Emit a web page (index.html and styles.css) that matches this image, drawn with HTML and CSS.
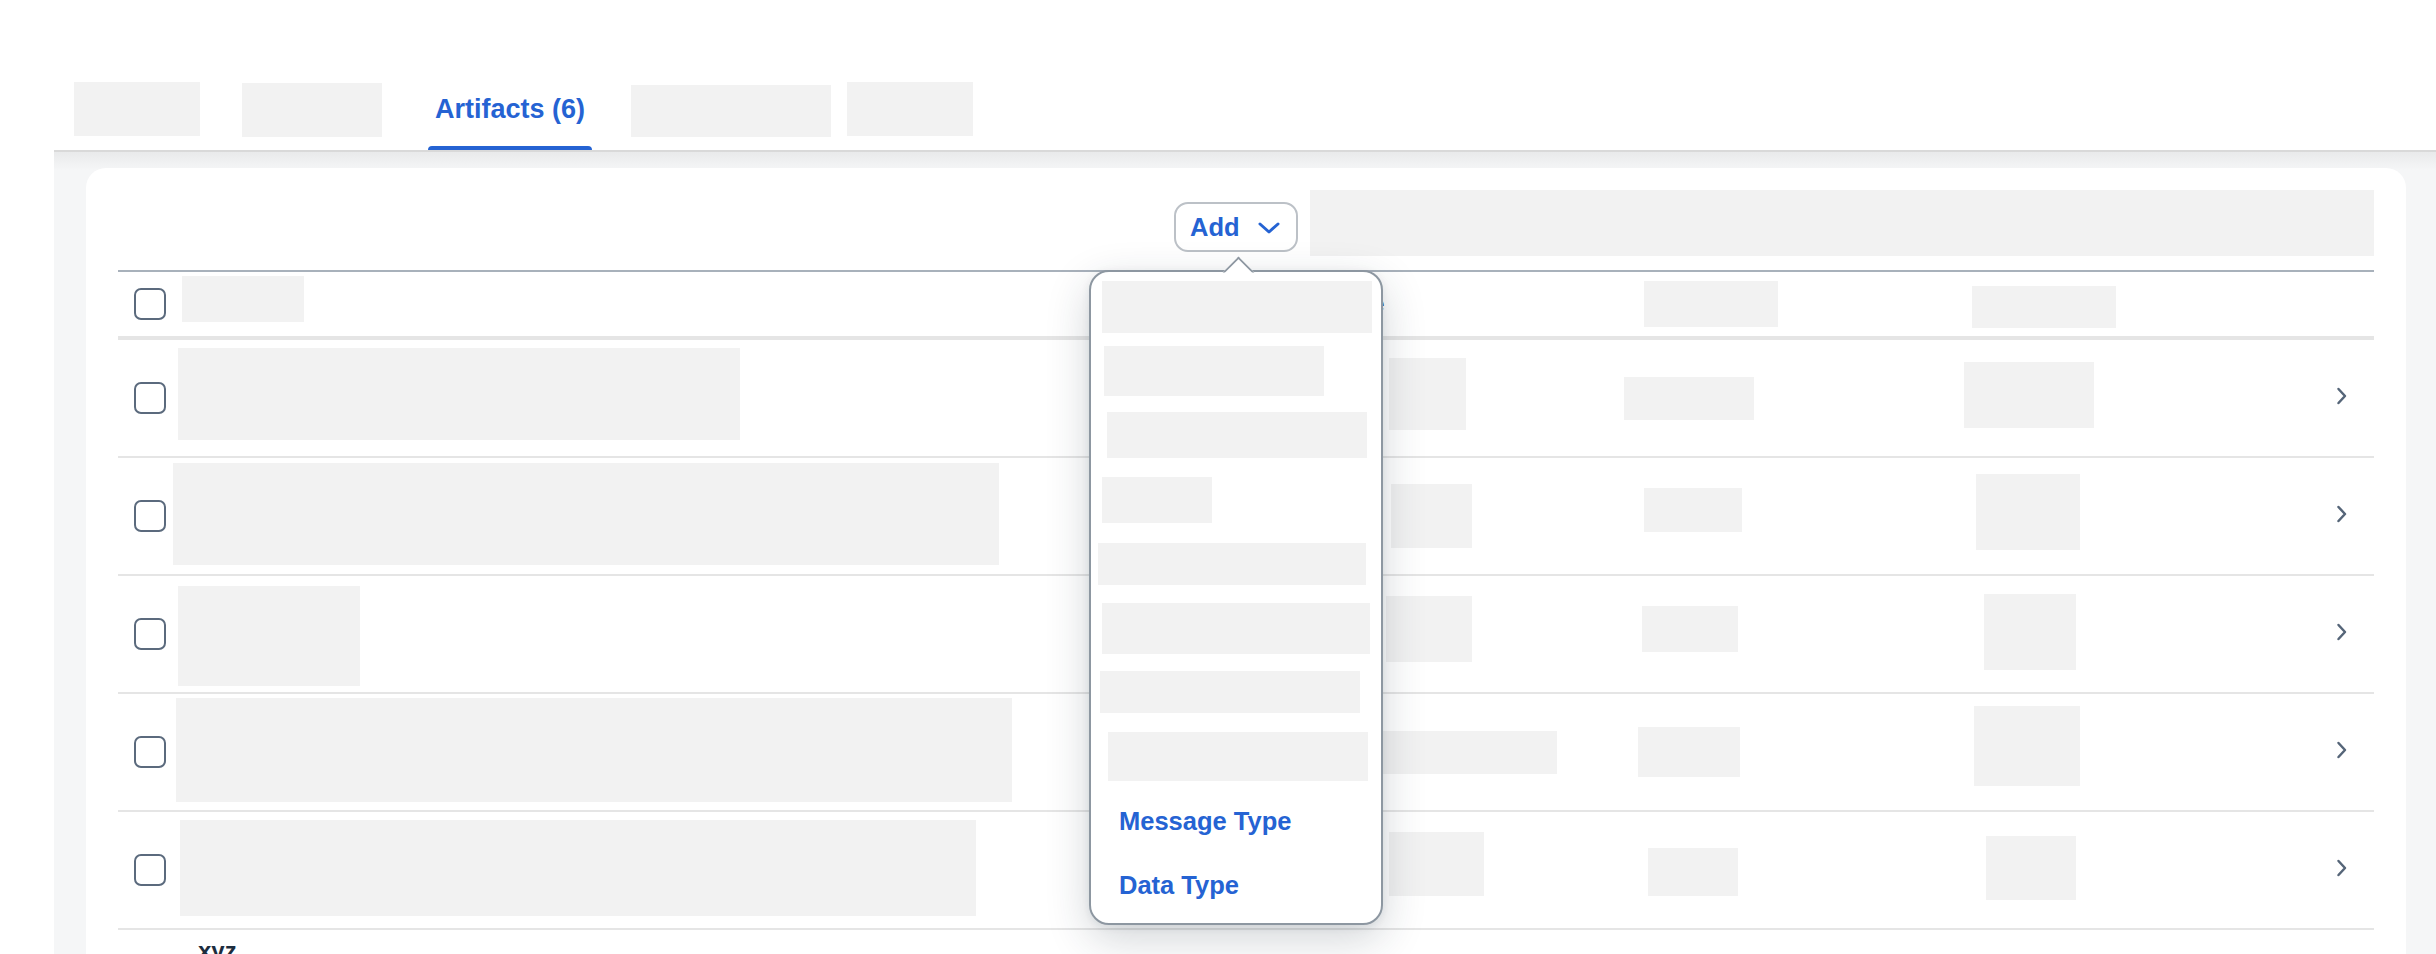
FILE: index.html
```html
<!DOCTYPE html>
<html lang="en">
<head>
<meta charset="utf-8">
<title>Artifacts</title>
<link rel="stylesheet" href="styles.css">
</head>
<body>
<div class="app">
  <div class="tabbar">
    <div class="sk" style="width:126px;height:54px;margin-top:82px"></div>
    <div class="sk" style="width:140px;height:54px;margin-top:83px;margin-left:42px"></div>
    <div class="tab" style="margin-left:46px">
      <span class="tab-label">Artifacts (6)</span>
      <span class="tab-line"></span>
    </div>
    <div class="sk" style="width:200px;height:52px;margin-top:85px;margin-left:39px"></div>
    <div class="sk" style="width:126px;height:54px;margin-top:82px;margin-left:16px"></div>
  </div>

  <div class="content">
    <div class="card">
      <div class="toolbar">
        <div class="add-wrap">
          <button class="add-btn" type="button">
            <span>Add</span>
            <svg class="add-chev" width="22" height="12" viewBox="0 0 22 12"><path d="M2 2 L11 10 L20 2" fill="none" stroke="#2563d3" stroke-width="3" stroke-linecap="round" stroke-linejoin="round"/></svg>
          </button>
          <div class="popover">
            <span class="pop-arrow"></span>
            <ul class="pop-list">
              <li class="pop-item"><span class="sk" style="width:270px;height:52px;margin-left:11px"></span></li>
              <li class="pop-item"><span class="sk" style="width:220px;height:50px;margin-left:13px"></span></li>
              <li class="pop-item"><span class="sk" style="width:260px;height:46px;margin-left:16px"></span></li>
              <li class="pop-item"><span class="sk" style="width:110px;height:46px;margin-left:11px"></span></li>
              <li class="pop-item"><span class="sk" style="width:268px;height:42px;margin-left:7px"></span></li>
              <li class="pop-item"><span class="sk" style="width:268px;height:51px;margin-left:11px"></span></li>
              <li class="pop-item"><span class="sk" style="width:260px;height:42px;margin-left:9px"></span></li>
              <li class="pop-item"><span class="sk" style="width:260px;height:49px;margin-left:17px"></span></li>
              <li class="pop-item pop-text">Message Type</li>
              <li class="pop-item pop-text">Data Type</li>
            </ul>
          </div>
        </div>
        <div class="sk" style="width:1064px;height:66px"></div>
      </div>

      <div class="table">
        <div class="row head">
          <span class="cell"><span class="checkbox"></span></span>
          <span class="cell"><span class="sk" style="width:122px;height:46px;margin-left:6px;margin-bottom:10px"></span></span>
          <span class="cell"><span class="peek">Type</span></span>
          <span class="cell"><span class="sk" style="width:134px;height:46px;margin-left:24px"></span></span>
          <span class="cell"><span class="sk" style="width:144px;height:42px;margin-left:12px;margin-top:6px"></span></span>
          <span class="cell"></span>
        </div>

        <div class="row">
          <span class="cell"><span class="checkbox"></span></span>
          <span class="cell"><span class="sk" style="width:562px;height:92px;margin-left:2px;margin-bottom:8px"></span></span>
          <span class="cell"><span class="sk" style="width:77px;height:72px;margin-left:6px;margin-bottom:8px"></span></span>
          <span class="cell"><span class="sk" style="width:130px;height:43px;margin-left:4px"></span></span>
          <span class="cell"><span class="sk" style="width:130px;height:66px;margin-left:4px;margin-bottom:6px"></span></span>
          <span class="cell"><svg class="chev" width="12" height="18" viewBox="0 0 12 18"><path d="M2.5 2 L9 9 L2.5 16" fill="none" stroke="#556578" stroke-width="2.5" stroke-linecap="round" stroke-linejoin="round"/></svg></span>
        </div>

        <div class="row">
          <span class="cell"><span class="checkbox"></span></span>
          <span class="cell"><span class="sk" style="width:826px;height:102px;margin-left:-3px;margin-bottom:4px"></span></span>
          <span class="cell"><span class="sk" style="width:81px;height:64px;margin-left:8px"></span></span>
          <span class="cell"><span class="sk" style="width:98px;height:44px;margin-left:24px;margin-bottom:12px"></span></span>
          <span class="cell"><span class="sk" style="width:104px;height:76px;margin-left:16px;margin-bottom:8px"></span></span>
          <span class="cell"><svg class="chev" width="12" height="18" viewBox="0 0 12 18"><path d="M2.5 2 L9 9 L2.5 16" fill="none" stroke="#556578" stroke-width="2.5" stroke-linecap="round" stroke-linejoin="round"/></svg></span>
        </div>

        <div class="row">
          <span class="cell"><span class="checkbox"></span></span>
          <span class="cell"><span class="sk" style="width:182px;height:100px;margin-left:2px;margin-top:4px"></span></span>
          <span class="cell"><span class="sk" style="width:86px;height:66px;margin-left:3px;margin-bottom:10px"></span></span>
          <span class="cell"><span class="sk" style="width:96px;height:46px;margin-left:22px;margin-bottom:10px"></span></span>
          <span class="cell"><span class="sk" style="width:92px;height:76px;margin-left:24px;margin-bottom:4px"></span></span>
          <span class="cell"><svg class="chev" width="12" height="18" viewBox="0 0 12 18"><path d="M2.5 2 L9 9 L2.5 16" fill="none" stroke="#556578" stroke-width="2.5" stroke-linecap="round" stroke-linejoin="round"/></svg></span>
        </div>

        <div class="row">
          <span class="cell"><span class="checkbox"></span></span>
          <span class="cell"><span class="sk" style="width:836px;height:104px;margin-bottom:4px"></span></span>
          <span class="cell"><span class="sk" style="width:174px;height:43px"></span></span>
          <span class="cell"><span class="sk" style="width:102px;height:50px;margin-left:18px"></span></span>
          <span class="cell"><span class="sk" style="width:106px;height:80px;margin-left:14px;margin-bottom:12px"></span></span>
          <span class="cell"><svg class="chev" width="12" height="18" viewBox="0 0 12 18"><path d="M2.5 2 L9 9 L2.5 16" fill="none" stroke="#556578" stroke-width="2.5" stroke-linecap="round" stroke-linejoin="round"/></svg></span>
        </div>

        <div class="row">
          <span class="cell"><span class="checkbox"></span></span>
          <span class="cell"><span class="sk" style="width:796px;height:96px;margin-left:4px;margin-bottom:4px"></span></span>
          <span class="cell"><span class="sk" style="width:95px;height:64px;margin-left:6px;margin-bottom:12px"></span></span>
          <span class="cell"><span class="sk" style="width:90px;height:48px;margin-left:28px;margin-top:4px"></span></span>
          <span class="cell"><span class="sk" style="width:90px;height:64px;margin-left:26px;margin-bottom:4px"></span></span>
          <span class="cell"><svg class="chev" width="12" height="18" viewBox="0 0 12 18"><path d="M2.5 2 L9 9 L2.5 16" fill="none" stroke="#556578" stroke-width="2.5" stroke-linecap="round" stroke-linejoin="round"/></svg></span>
        </div>

        <div class="group-row">xyz</div>
      </div>
    </div>
  </div>
</div>
</body>
</html>
```

FILE: styles.css
```css
* { box-sizing: border-box; }

html, body {
  margin: 0;
  padding: 0;
  background: #ffffff;
  overflow: hidden;
  height: 954px;
}

body {
  font-family: "Liberation Sans", Arial, sans-serif;
  color: #1d2d3e;
}

.app {
  margin-left: 54px;
  height: 954px;
  display: flex;
  flex-direction: column;
}

.sk {
  display: block;
  background: #f2f2f2;
  flex: none;
}

/* Tab bar */
.tabbar {
  height: 152px;
  flex: none;
  display: flex;
  align-items: flex-start;
  padding-left: 20px;
  background: #ffffff;
  border-bottom: 2px solid #d9d9d9;
}

.tab {
  align-self: stretch;
  display: flex;
  flex-direction: column;
  justify-content: flex-end;
  align-items: stretch;
}

.tab-label {
  display: block;
  padding: 0 7px;
  margin-bottom: 21px;
  font-size: 27px;
  line-height: 31px;
  font-weight: 700;
  color: #2563d3;
  white-space: nowrap;
}

.tab-line {
  display: block;
  height: 4px;
  background: #2563d3;
  border-radius: 4px 4px 0 0;
}

/* Content */
.content {
  flex: 1;
  background: linear-gradient(#e9eaeb 0, #f5f6f7 18px);
  padding: 16px 30px 0 32px;
}

.card {
  height: 100%;
  background: #ffffff;
  border-radius: 20px 20px 0 0;
  padding: 22px 32px 0 32px;
}

.toolbar {
  display: flex;
  justify-content: flex-end;
  align-items: flex-start;
  gap: 12px;
  height: 66px;
}

.add-wrap {
  position: relative;
  margin-top: 12px;
}

.add-btn {
  display: flex;
  align-items: center;
  gap: 18px;
  width: 124px;
  height: 50px;
  padding: 0 0 0 14px;
  border: 2px solid #bcc1c7;
  border-radius: 14px;
  background: #ffffff;
  font-family: "Liberation Sans", Arial, sans-serif;
  font-size: 25.5px;
  font-weight: 700;
  color: #2563d3;
}

.add-chev {
  display: block;
  margin-top: 1px;
}

/* Popover */
.popover {
  position: absolute;
  left: -85px;
  top: 68px;
  width: 294px;
  height: 655px;
  background: #ffffff;
  border: 2px solid #8d97a1;
  border-radius: 20px;
  box-shadow: 0 14px 44px rgba(30, 45, 62, 0.2), 0 2px 8px rgba(30, 45, 62, 0.08);
  z-index: 10;
}

.pop-arrow {
  position: absolute;
  left: 135.5px;
  top: -11.5px;
  width: 23px;
  height: 23px;
  background: #ffffff;
  border-top: 2px solid #8d97a1;
  border-left: 2px solid #8d97a1;
  transform: rotate(45deg);
  clip-path: polygon(0 0, 100% 0, 0 100%);
}

.pop-list {
  position: relative;
  list-style: none;
  margin: 0;
  padding: 3px 0 0 0;
}

.pop-item {
  height: 64.2px;
  display: flex;
  align-items: center;
}

.pop-text {
  padding-left: 28px;
  font-size: 25.5px;
  line-height: 30px;
  font-weight: 700;
  color: #2563d3;
  white-space: nowrap;
}

/* Table */
.table {
  margin-top: 14px;
  border-top: 2px solid #a8b1bb;
}

.row {
  display: grid;
  grid-template-columns: 58px 1207px 237px 340px 360px 1fr;
  height: 118px;
  border-bottom: 2px solid #e5e5e5;
}

.row.head {
  height: 68px;
  border-bottom: 4px solid #e5e5e5;
}

.cell {
  display: flex;
  align-items: center;
  min-width: 0;
}

.checkbox {
  display: block;
  width: 32px;
  height: 32px;
  margin-left: 16px;
  border: 2px solid #5b6a7d;
  border-radius: 7px;
  background: #ffffff;
}

.peek {
  margin-left: -53px;
  font-size: 24px;
  line-height: 28px;
  font-weight: 700;
  color: #1d2d3e;
  white-space: nowrap;
}

.chev {
  display: block;
  margin-left: 16px;
  margin-bottom: 4px;
}

.group-row {
  padding: 7px 0 0 80px;
  font-size: 24px;
  line-height: 28px;
  font-weight: 700;
  color: #1d2d3e;
}
```
